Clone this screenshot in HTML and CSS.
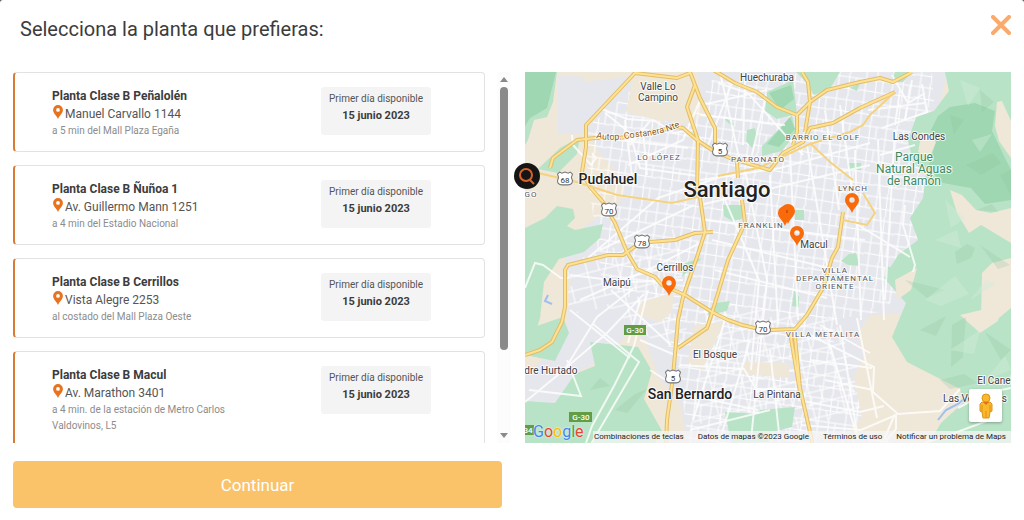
FILE: index.html
```html
<!DOCTYPE html>
<html lang="es">
<head>
    <meta charset="UTF-8">
    <meta name="viewport" content="width=device-width, initial-scale=1.0">
    <title>Selecciona tu planta</title>
    <link rel="stylesheet" href="styles.css">
</head>
<body>
    <svg class="defs" width="0" height="0" aria-hidden="true">
        <symbol id="pin" viewBox="0 0 14 20">
            <path fill-rule="evenodd" d="M7 0a7 7 0 0 0-7 7c0 5 5 7.500 7 13 2-5.500 7-8 7-13a7 7 0 0 0-7-7zm0 4.300a2.700 2.700 0 1 1 0 5.400 2.700 2.700 0 0 1 0-5.400z"/>
        </symbol>
    </svg>

    <div class="modal">
        <header class="modal-header">
            <h1>Selecciona la planta que prefieras:</h1>
            <button class="close" type="button" aria-label="Cerrar">
                <svg viewBox="0 0 20 20" width="20" height="20"><path d="M2 2l16 16M18 2L2 18"/></svg>
            </button>
        </header>

        <main class="content">
            <div class="list-wrap">
                <ul class="list">
                    <li class="card">
                        <div class="info">
                            <h2>Planta Clase B Peñalolén</h2>
                            <p class="address"><svg class="pin"><use href="#pin"/></svg>Manuel Carvallo 1144</p>
                            <p class="hint">a 5 min del Mall Plaza Egaña</p>
                        </div>
                        <div class="date">
                            <p>Primer día disponible</p>
                            <strong>15 junio 2023</strong>
                        </div>
                    </li>
                    <li class="card">
                        <div class="info">
                            <h2>Planta Clase B Ñuñoa 1</h2>
                            <p class="address"><svg class="pin"><use href="#pin"/></svg>Av. Guillermo Mann 1251</p>
                            <p class="hint">a 4 min del Estadio Nacional</p>
                        </div>
                        <div class="date">
                            <p>Primer día disponible</p>
                            <strong>15 junio 2023</strong>
                        </div>
                    </li>
                    <li class="card">
                        <div class="info">
                            <h2>Planta Clase B Cerrillos</h2>
                            <p class="address"><svg class="pin"><use href="#pin"/></svg>Vista Alegre 2253</p>
                            <p class="hint">al costado del Mall Plaza Oeste</p>
                        </div>
                        <div class="date">
                            <p>Primer día disponible</p>
                            <strong>15 junio 2023</strong>
                        </div>
                    </li>
                    <li class="card">
                        <div class="info">
                            <h2>Planta Clase B Macul</h2>
                            <p class="address"><svg class="pin"><use href="#pin"/></svg>Av. Marathon 3401</p>
                            <p class="hint">a 4 min. de la estación de Metro Carlos Valdovinos, L5</p>
                        </div>
                        <div class="date">
                            <p>Primer día disponible</p>
                            <strong>15 junio 2023</strong>
                        </div>
                    </li>
                </ul>
                <div class="rail" aria-hidden="true">
                    <svg viewBox="0 0 8 5" width="8" height="5"><path d="M0 5l4-5 4 5z"/></svg>
                    <div class="track"><div class="thumb"></div></div>
                    <svg viewBox="0 0 8 5" width="8" height="5"><path d="M0 0l4 5 4-5z"/></svg>
                </div>
            </div>

            <div class="map">
                <svg class="map-canvas" viewBox="525 72 486 371" preserveAspectRatio="xMidYMid slice">
                    <defs>
                        <pattern id="blocks" width="27" height="23" patternUnits="userSpaceOnUse" patternTransform="rotate(8)">
                            <path d="M0 4h27M0 15l27 1M5 0v23M15 0l1 23M22 4v12" fill="none" stroke="#fff" stroke-width="1"/>
                        </pattern>
                        <pattern id="blocks2" width="31" height="26" patternUnits="userSpaceOnUse" patternTransform="rotate(-14)">
                            <path d="M0 5h31M0 17h31M8 0v26M20 0v17" fill="none" stroke="#fff" stroke-width="1"/>
                        </pattern>
                        <symbol id="shield" viewBox="0 0 16 15">
                            <path d="M3 1l2 1 3-1 3 1 2-1 2 2-1 3 1 3c0 3-2 4-4 4H5c-2 0-4-1-4-4l1-3-1-3z" fill="#fff" stroke="#777" stroke-width="1"/>
                        </symbol>
                    </defs>

                    <!-- suelo -->
                    <path class="sand" d="M525 72h486v371H525z"/>
                    <path class="urban" d="M558 75l26 2v57h-26zM628 77l17 25 32 24 28-10-8-44h250l-8 38-12 14-3 23 22 30-4 45-14 37 10 26-30 28-38 2-13 20 10 30 25 35 5 48H688l-8-45-20-24-14-36 8-18-44-10-24-36h-24l6-37 20-18 33-23 5-18-32-37-6-15-9-13 3-36z"/>
                    <path class="urban" d="M572 268l90-10 30 40-20 44-30-3-8-12-30 32-25 12-30 46-24-18v-22l30-30 12-24z"/>
                    <path d="M584 130l48-40 50 45 30-55 100-8 120 0 2 30-16 45 22 40-20 90-40 35-44 7-4 40 60 84H688l-10-80-20-50-56-30-12-90z" fill="url(#blocks)"/>
                    <path d="M568 262l110-35 10 120-26 0-54-40-40 8zM700 300l134 18 40 85-80 30-100-10z" fill="url(#blocks2)"/>
                    <path class="sand" d="M632 82l30 5 22 20-20 15-38-10zM642 302l32-10-2 20-12 10-24-8zM694 325l30-3-22 48-14-8zM745 362l43 1 2 15-48-4zM880 325l28 28 32 28-10 30-34 26-54 3 20-22-8-42z"/>

                    <!-- parques -->
                    <path class="green" d="M525 72h32l-4 30-6 15-13 3-6 20-3 5zM538 169l22-21 20-11-3 17-19 19zM525 228l20-10 12-12 16 3 2 9-8 8 8 4 28-6-3 14-16 14-25 7-15 23-4 36-10 32h-5zM525 330l38-13 6 16-14 28-30-6zM620 345l18 2 14 24-8 28 18 32-8 14H525v-44l30 2 20-29 20-8-5-24 18 2z"/>
                    <path class="green" d="M767 92l26-12 4 34-20 5-12-8zM796 72h44l-9 15-17 8-9-14zM747 130l8-2 2 10-5 10-6-7zM726 118l8 6-2 2-7-6zM762 146l20-20 10-11 4 18-14 18-20 5zM795 210h9v10h-9zM856 253l4 13-12-1-7-4 8-7zM886 266l12 3 1 9-10-1-3-4zM794 290l5 7v10l-7-1zM895 72h17l-9 10h-12zM850 88l10-5-3 8zM848 163h13v7h-12zM723 205h19v14l-10 2-8-5zM702 258l-20 19 3-14zM714 303l16-2-3 10-20 4zM760 410l35-3-3 20-40 10zM725 412l34 2 10 28-38 1z"/>
                    <path class="green" d="M945 72h66v371h-82l12-20 22-20-3-14-53-27-15-25 14-34-22-25 14-23 20-15-8-22 13-20 3-24-13-12-5-21 8-24 18-6 15-20z"/>
                    <path class="dark-green" d="M950 107l25-4 20 8-3 20 12 25 7 14v30l-26 4-14-16-28-5-15-15 8-26-5-12 7-14z"/>
                    <path class="dark-green" d="M525 72h31l-9 36-17 10-5 8zM769 93l22-8 3 14-14 11zM767 144l23-27 5 12-16 18z"/>
                    <path class="sand" d="M997 102l5-1 9 20v37l-12-17-4-15zM950 190l12 5 14 15 15 3 20-5v35l-30-18-12 8-12-20zM982 273l10-10 19-5v50l-18 15-12-5zM960 315l42-10-4 16-18 12zM922 132l14 10-6 14-12-4zM895 280l22-12-6 22-14 10z"/>
                    <path class="shade" d="M955 252l12-8 8 4-4 10-14 6zM966 165l27-12 8 10-20 12zM950 115l14 5-10 14zM977 210l15-6 6 8zM920 330l26-14-10 20zM952 325l14-8-3 40-12 10zM905 280l40 10-18 8zM980 245l30 20-12 4zM985 332l26 18-10 10zM940 380l24-6 14 9-28 6zM1000 175l11-5v25zM615 410l20-16 12-5-20 24zM590 390l10-12 10 8zM980 90l14 12-12 10z"/>
                    <path class="light" d="M945 200l20 18-14 10zM935 240l22-10 4 18zM960 80l20 8-12 18zM925 300l30-24 14 18-28 12zM970 300l16-20 10 4zM950 350l30-20-6 24zM972 140l20-6-12 18zM985 380l20-24 6 14z"/>

                    <!-- calles principales -->
                    <g class="street">
                        <path d="M602 109l25 10 28 2 19 12 19-3 10 12M572 135l1 10 18 20 5-7-4-5M605 113l25 20 10 35 58 8M650 121l-20 24M628 165l55-25 18-42M618 140l70 8M625 120l8 65M643 130l4 45"/>
                        <path d="M525 288l10-25 8 2 18 13 7 0M570 275l58 7 55-2M580 300l72-32 48-25M570 310l60 48M593 324l46 38-48 82M556 376l50-42 38-40M611 290l60 55M640 300l-12 43M600 250l94-45M588 258l70-60 65-22"/>
                        <path d="M718 83l30 10 55 62M733 80l-25 65M745 80l-2 65M766 95l-14 60M700 115l85 10M720 72l20 90M702 105l65-15M700 180l80-12 90-25M700 205l170-40M705 220l160 20M712 240l125 30M715 270l112 28M725 200l34 80-8 90M745 170l22 110-16 160M770 175l8 150M790 150l8 170M807 145l30 180M825 110l14 100M840 105l12 85M855 150l6 170M878 140l6 180M895 130l-10 170"/>
                        <path d="M850 220l60 37M905 205l-2 20 12 40-2 7M892 75l16 28 17-10M868 110l57-7M882 128l45-16-5-28M880 155l35-10M900 90l-5 35M912 80l-7 40"/>
                        <path d="M810 335l64 32-1 25 25 22 42-3 20-22M820 325l50 28M840 325l17 108M857 318l20 100M810 360l62 8M825 380l48 10M798 400l62 12 24-6M801 425l60 5 35-15v14l-10 12M830 345l28 95M770 350l10 92M750 340l-30 100M725 320l-32 100M680 365l64 4 12 20 44 0M688 395l70 15M690 430l80-20M895 414l-12 28M1011 388l-25 5-28 15M925 443l35-12 32-12"/>
                        <path d="M648 290l-14 56-20 40-22 40-6 17M525 402l40-33 32-52 36-28M567 360l14 36-52-6M640 340l35 15M650 370l22 14"/>
                    </g>
                    <path class="river" d="M938 420l8-10 12-6 14-12M552 304l-7-3 3-6"/>

                    <!-- autopistas -->
                    <g class="road-edge">
                        <path id="r1" d="M690 73l-13 5-42-5-49 52v22l-4 25 8 15 13 15 12 21 12 29 10 17 18 8 7 8 23 10 27 17 16 8 14 5 13 3 15 2 25-1 12-14 16-27 9-30 6-11 5-35"/>
                        <path id="r2" d="M550 168l3-10 24-18 18-2h25l57-11 6 1 14 12 15 10 18 8 40 12 13-17 20-11 7-14 23-5 27-15 35-16"/>
                        <path id="r3" d="M690 72l10 26 15 30v17M695 85l-8 22 11 33-1 55 3 2 5 35-8 25-14 40-5 23-5 57-6 43-1 28"/>
                        <path id="r4" d="M700 62l35 21 22 9 20 15 20 8v17l-4 13M802 72l6 10 2 20-13 13M810 102l17-12 33-8 20-4 13 4 19-10M810 102l-5 30"/>
                        <path id="r5" d="M713 232l-18 1-20 7-25 2-10 1-17 12h-15l-40 10-3 5v37l-3 15-10 20-12 8-15 5M795 337l5 51 10 44 3 15M790 332l10 60"/>
                        <path id="r6" d="M742 200l3 23-17 37-16 53-5 15-29 20M737 162l1 16"/>
                    </g>
                    <g class="road">
                        <use href="#r1"/><use href="#r2"/><use href="#r3"/><use href="#r4"/><use href="#r5"/><use href="#r6"/>
                    </g>
                    <path class="avenue" d="M538 173l39 9 40 13 55 8 26-6M863 193l12 20-8 12-24-5M810 143l20 19 23 18M895 92l-25 23-7 10-13 7-40 12-52 24-40 8"/>

                    <!-- rutas -->
                    <g class="route">
                        <use href="#shield" x="711" y="142" width="18" height="16"/><text x="720" y="154">5</text>
                        <use href="#shield" x="556" y="171" width="18" height="16"/><text x="565" y="183">68</text>
                        <use href="#shield" x="600" y="202" width="18" height="16"/><text x="609" y="214">70</text>
                        <use href="#shield" x="633" y="234" width="18" height="16"/><text x="642" y="246">78</text>
                        <use href="#shield" x="754" y="320" width="18" height="16"/><text x="763" y="332">70</text>
                        <use href="#shield" x="664" y="369" width="18" height="16"/><text x="673" y="381">5</text>
                    </g>
                    <g class="local-route">
                        <rect x="624" y="325" width="22" height="10"/><text x="635" y="333">G-30</text>
                        <rect x="569" y="412" width="23" height="10"/><text x="581" y="420">G-30</text>
                        <rect x="518" y="425" width="16" height="10"/><text x="524" y="433">G-34</text>
                    </g>

                    <!-- nombres -->
                    <g class="town">
                        <text x="767" y="81">Huechuraba</text>
                        <text x="658" y="90">Valle Lo</text>
                        <text x="658" y="101">Campino</text>
                        <text x="919" y="140">Las Condes</text>
                        <text x="675" y="271">Cerrillos</text>
                        <text x="617" y="286">Maipú</text>
                        <text x="814" y="248">Macul</text>
                        <text x="715" y="358">El Bosque</text>
                        <text x="777" y="398">La Pintana</text>
                        <text x="545" y="374">Padre Hurtado</text>
                        <text x="998" y="384">El Canelo</text>
                        <text x="975" y="402">Las Vertientes</text>
                    </g>
                    <g class="district">
                        <text x="659" y="160">LO LÓPEZ</text>
                        <text x="758" y="162">PATRONATO</text>
                        <text x="823" y="140">BARRIO EL GOLF</text>
                        <text x="853" y="191">LYNCH</text>
                        <text x="761" y="228">FRANKLIN</text>
                        <text x="531" y="197">GO</text>
                        <text x="835" y="273">VILLA</text>
                        <text x="835" y="281">DEPARTAMENTAL</text>
                        <text x="835" y="289">ORIENTE</text>
                        <text x="823" y="337">VILLA METALITA</text>
                    </g>
                    <g class="city">
                        <text class="capital" x="727" y="197">Santiago</text>
                        <text x="608" y="184">Pudahuel</text>
                        <text x="690" y="399">San Bernardo</text>
                    </g>
                    <g class="park">
                        <text x="914" y="161">Parque</text>
                        <text x="914" y="173">Natural Aguas</text>
                        <text x="914" y="185">de Ramón</text>
                    </g>
                    <path id="costanera" d="M596 138q16 4 40-1 24-1 45-11" fill="none"/>
                    <text class="road-name"><textPath href="#costanera">Autop. Costanera Nte</textPath></text>

                    <!-- plantas -->
                    <g class="marker">
                        <use href="#pin" x="662" y="276" width="14" height="20"/>
                        <use href="#pin" x="790" y="226" width="14" height="20"/>
                        <use href="#pin" x="845" y="193" width="14" height="20"/>
                        <use href="#pin" x="778" y="206" width="14" height="20"/>
                        <use href="#pin" x="781" y="204" width="14" height="20"/>
                        <circle cx="786" cy="212" r="6"/>
                        <path class="marker-line" d="M787 210v3"/>
                    </g>
                </svg>

                <button class="search" type="button" aria-label="Buscar">
                    <svg viewBox="0 0 26 26" width="26" height="26"><circle cx="12" cy="12" r="6"/><path d="M16 17l4 4"/></svg>
                </button>
                <button class="pegman" type="button" aria-label="Street View">
                    <svg viewBox="0 0 16 26" width="16" height="26">
                        <path d="M4 9h8l2 2v7l-2 1-1 6H5l-1-6-2-1v-7z" fill="#fbb829" stroke="#d9941c"/>
                        <circle cx="8" cy="5" r="4" fill="#fbb829" stroke="#d9941c"/>
                        <path d="M5 9l3 3 3-3z" fill="#e3701e"/>
                        <path d="M4 12v7M12 12v7M8 18v7" stroke="#d9941c"/>
                    </svg>
                </button>
                <a class="google" href="#"><span class="b">G</span><span class="r">o</span><span class="y">o</span><span class="b">g</span><span class="g">l</span><span class="r">e</span></a>
                <div class="credits">
                    <button type="button">Combinaciones de teclas</button>
                    <span>Datos de mapas ©2023 Google</span>
                    <a href="#">Términos de uso</a>
                    <a href="#">Notificar un problema de Maps</a>
                </div>
            </div>

            <button class="continue" type="button">Continuar</button>
        </main>
    </div>
</body>
</html>
```
FILE: styles.css
```css
* {
    box-sizing: border-box;
}
body {
    font-family: Roboto, 'Liberation Sans', sans-serif;
    background-color: #555;
    color: #3c3c3c;
    margin: 0;
}
h1, h2, p, ul {
    margin: 0;
    padding: 0;
}
button {
    font-family: inherit;
    border: none;
    padding: 0;
    cursor: pointer;
}
a {
    text-decoration: none;
}
.defs {
    position: absolute;
}
.modal {
    display: flex;
    flex-direction: column;
    height: 100vh;
    background-color: #fff;
    border-radius: 3px 3px 0 0;
}
.modal-header {
    display: flex;
    justify-content: space-between;
    align-items: flex-start;
    padding: 15px 13px 29px 20px;
}
h1 {
    font-size: 20px;
    line-height: 28px;
    font-weight: 400;
}
.close {
    display: flex;
    background: none;
}
.close svg {
    fill: none;
    stroke: #fbaa6c;
    stroke-width: 4;
    stroke-linecap: round;
}

/* Lista y mapa */
.content {
    flex: 1;
    min-height: 0;
    display: grid;
    grid-template-columns: 49% 1fr;
    grid-template-rows: minmax(0, 1fr) auto;
    gap: 18px 23px;
    padding: 0 13px 12px;
}
.list-wrap {
    display: flex;
    gap: 12px;
    min-height: 0;
    margin-right: -9px;
}
.list {
    flex: 1;
    list-style: none;
    overflow-y: auto;
    scrollbar-width: none;
}
.card {
    display: grid;
    grid-template-columns: 1fr 110px;
    align-items: start;
    gap: 70px;
    padding: 14px 53px 12px 37px;
    margin-bottom: 13px;
    border: 1px solid #e2e2e2;
    border-left: 2px solid #d97a35;
    border-radius: 4px;
}
h2 {
    font-size: 12px;
    line-height: 18px;
    font-weight: 700;
}
.address {
    display: flex;
    align-items: center;
    gap: 1px;
    font-size: 12px;
    line-height: 18px;
    color: #555;
}
.pin {
    width: 12px;
    height: 14px;
    margin-bottom: 4px;
    fill: #e8731f;
}
.hint {
    font-size: 10px;
    line-height: 16px;
    color: #8c8c8c;
}
.date {
    padding: 4px 4px 10px;
    background-color: #f4f4f4;
    border-radius: 3px;
    text-align: center;
    font-size: 10px;
    line-height: 16px;
    color: #555;
}
.date strong {
    display: block;
    font-size: 11px;
    line-height: 18px;
    color: #3c3c3c;
}
.rail {
    display: flex;
    flex-direction: column;
    align-items: center;
    gap: 5px;
    width: 14px;
    padding: 5px 0;
    background-color: #fcfcfc;
    fill: #8a8a8a;
}
.track {
    flex: 1;
}
.thumb {
    width: 8px;
    height: 77%;
    border-radius: 4px;
    background-color: #8a8a8a;
}
.continue {
    grid-column: 1;
    height: 47px;
    border-radius: 4px;
    background-color: #fac36a;
    color: #fff;
    font-size: 17px;
    font-weight: 400;
}

/* Mapa */
.map {
    position: relative;
    min-height: 0;
}
.map-canvas {
    display: block;
    width: 100%;
    height: 100%;
}
.sand { fill: #efe7d8; }
.urban { fill: #e6e7ed; }
.green { fill: #b9e3c6; }
.dark-green { fill: #9ed7b1; }
.shade { fill: #8fc5a0; opacity: 0.25; }
.light { fill: #d3eed9; opacity: 0.4; }
.street {
    fill: none;
    stroke: #fff;
    stroke-width: 2;
    opacity: 0.8;
}
.river {
    fill: none;
    stroke: #9cc0f0;
    stroke-width: 2;
}
.road-edge {
    fill: none;
    stroke: #e3bd67;
    stroke-width: 4;
    stroke-linejoin: round;
}
.road {
    fill: none;
    stroke: #fde293;
    stroke-width: 2;
    stroke-linejoin: round;
}
.avenue {
    fill: none;
    stroke: #f5d27f;
    stroke-width: 2;
}
.map-canvas text {
    text-anchor: middle;
    paint-order: stroke;
    stroke: #fff;
    stroke-width: 2px;
    stroke-opacity: 0.8;
    stroke-linejoin: round;
}
.town { font-size: 10px; fill: #3f4246; }
.district {
    font-size: 8px;
    letter-spacing: 1px;
    fill: #55585d;
}
.city {
    font-size: 14px;
    font-weight: 500;
    fill: #222;
}
.capital { font-size: 22px; }
.park { font-size: 12px; fill: #3d8b5c; }
.route { font-size: 8px; fill: #333; }
.local-route { font-size: 8px; font-weight: 500; }
.local-route rect { fill: #639c43; }
.map-canvas .local-route text { fill: #fff; stroke: none; }
.map-canvas .road-name {
    font-size: 9px;
    fill: #8a5a2b;
    text-anchor: start;
}
.marker { fill: #f96a0b; }
.marker-line { stroke: #a83c00; }
.search {
    position: absolute;
    top: 91px;
    left: -11px;
    display: flex;
    border-radius: 50%;
    background-color: #151515;
}
.search svg {
    fill: none;
    stroke: #d9622b;
    stroke-width: 2;
}
.pegman {
    position: absolute;
    right: 9px;
    bottom: 21px;
    display: flex;
    justify-content: center;
    align-items: center;
    width: 33px;
    height: 33px;
    background-color: #fff;
    border-radius: 2px;
    box-shadow: 0 1px 3px rgba(0, 0, 0, 0.3);
}
.pegman svg {
    fill: none;
}
.google {
    position: absolute;
    left: 8px;
    bottom: 0;
    font-size: 16px;
    line-height: 22px;
    text-shadow: 0 0 2px #fff;
}
.b { color: #4285f4; }
.r { color: #ea4335; }
.y { color: #fbbc05; }
.g { color: #34a853; }
.credits {
    position: absolute;
    right: 0;
    bottom: 0;
    display: flex;
    gap: 14px;
    padding: 0 5px 0 1px;
    font-size: 8px;
    line-height: 12px;
    white-space: nowrap;
    color: #222;
    background-color: rgba(245, 245, 245, 0.75);
}
.credits button,
.credits a {
    font-size: 8px;
    line-height: 12px;
    color: #222;
    background: none;
}
```
